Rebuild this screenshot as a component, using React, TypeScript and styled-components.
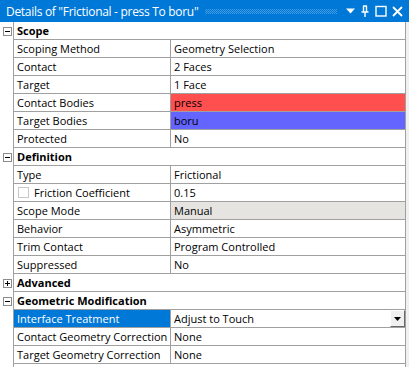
import React from 'react'
import styled, { createGlobalStyle } from 'styled-components'

const GlobalStyle = createGlobalStyle`
  html, body {
    margin: 0;
    padding: 0;
    background: #ffffff;
  }
  body {
    font-family: 'Open Sans', 'Noto Sans', sans-serif;
    font-size: 11px;
    color: #000;
  }
`

const LINE = '#a0a0a0'
const ACCENT = '#0078d7'

const Panel = styled.div`
  width: 409px;
  height: 367px;
  display: flex;
  flex-direction: column;
  overflow: hidden;
  background: #ffffff;
`

const TitleBar = styled.div`
  height: 22px;
  flex: none;
  display: flex;
  align-items: center;
  background: ${ACCENT};
  color: #fff;
  padding-left: 6px;
  padding-right: 6px;
  gap: 7px;
  font-size: 12px;
`

const TitleText = styled.span`
  white-space: nowrap;
  letter-spacing: -0.3px;
`

const Grip = styled.div`
  flex: 1;
  height: 5px;
  margin-top: 1px;
  background-image:
    linear-gradient(45deg, rgba(255, 255, 255, 0.25) 25%, transparent 25%, transparent 75%, rgba(255, 255, 255, 0.25) 75%),
    linear-gradient(45deg, rgba(255, 255, 255, 0.25) 25%, transparent 25%, transparent 75%, rgba(255, 255, 255, 0.25) 75%);
  background-size: 2px 2px;
  background-position: 0 0, 1px 1px;
`

const TitleButtons = styled.div`
  display: flex;
  align-items: center;
  gap: 5px;
  margin-left: 2px;
`

const Body = styled.div`
  flex: 1;
  display: flex;
  background: #f0f0f0;
`

const Grid = styled.div`
  width: 406px;
  background: #ffffff;
  display: flex;
  flex-direction: column;
`

const Row = styled.div`
  display: flex;
  height: 18px;
`

const Gutter = styled.div`
  width: 13px;
  flex: none;
  display: flex;
  align-items: center;
  justify-content: flex-start;
  padding-left: 3px;
  box-sizing: border-box;
`

const Expander = styled.div<{ $open: boolean }>`
  width: 9px;
  height: 9px;
  box-sizing: border-box;
  border: 1px solid #8c8c8c;
  background: #fff;
  position: relative;

  &::before {
    content: '';
    position: absolute;
    left: 1px;
    right: 1px;
    top: 3px;
    height: 1px;
    background: #000;
  }

  &::after {
    content: '';
    display: ${(p) => (p.$open ? 'none' : 'block')};
    position: absolute;
    top: 1px;
    bottom: 1px;
    left: 3px;
    width: 1px;
    background: #000;
  }
`

const Cell = styled.div<{ $w: number; $bg?: string; $color?: string; $bold?: boolean }>`
  width: ${(p) => p.$w}px;
  flex: none;
  box-sizing: border-box;
  height: 18px;
  border-left: 1px solid ${LINE};
  border-bottom: 1px solid ${LINE};
  background: ${(p) => p.$bg || '#fff'};
  color: ${(p) => p.$color || '#000'};
  font-weight: ${(p) => (p.$bold ? 700 : 400)};
  display: flex;
  align-items: center;
  padding-left: 3px;
  white-space: nowrap;
  position: relative;
  line-height: 17px;
`

const EndCell = styled(Cell)`
  border-right: 1px solid ${LINE};
`

const CheckBox = styled.span`
  width: 11px;
  height: 11px;
  box-sizing: border-box;
  border: 1px solid #c8c8c8;
  background: #fff;
  margin-left: 1px;
  margin-right: 5px;
`

const DropButton = styled.div`
  position: absolute;
  right: 0;
  top: 0;
  width: 15px;
  height: 17px;
  box-sizing: border-box;
  background: #f0f0f0;
  border-top: 1px solid #fff;
  border-left: 1px solid #fff;
  border-right: 1px solid #696969;
  border-bottom: 1px solid #696969;
  display: flex;
  align-items: center;
  justify-content: center;
`

const Filler = styled.div`
  flex: 1;
  margin-left: 13px;
  border-left: 1px solid ${LINE};
  border-right: 1px solid ${LINE};
`

type Item =
  | { kind: 'cat'; label: string; open: boolean }
  | {
      kind: 'prop'
      label: string
      value: string
      valueBg?: string
      labelSelected?: boolean
      check?: boolean
      dropdown?: boolean
    }

const items: Item[] = [
  { kind: 'cat', label: 'Scope', open: true },
  { kind: 'prop', label: 'Scoping Method', value: 'Geometry Selection' },
  { kind: 'prop', label: 'Contact', value: '2 Faces' },
  { kind: 'prop', label: 'Target', value: '1 Face' },
  { kind: 'prop', label: 'Contact Bodies', value: 'press', valueBg: '#ff4f4f' },
  { kind: 'prop', label: 'Target Bodies', value: 'boru', valueBg: '#6464ff' },
  { kind: 'prop', label: 'Protected', value: 'No' },
  { kind: 'cat', label: 'Definition', open: true },
  { kind: 'prop', label: 'Type', value: 'Frictional' },
  { kind: 'prop', label: 'Friction Coefficient', value: '0.15', check: true },
  { kind: 'prop', label: 'Scope Mode', value: 'Manual', valueBg: '#e6e4e1' },
  { kind: 'prop', label: 'Behavior', value: 'Asymmetric' },
  { kind: 'prop', label: 'Trim Contact', value: 'Program Controlled' },
  { kind: 'prop', label: 'Suppressed', value: 'No' },
  { kind: 'cat', label: 'Advanced', open: false },
  { kind: 'cat', label: 'Geometric Modification', open: true },
  {
    kind: 'prop',
    label: 'Interface Treatment',
    value: 'Adjust to Touch',
    labelSelected: true,
    dropdown: true,
  },
  { kind: 'prop', label: 'Contact Geometry Correction', value: 'None' },
  { kind: 'prop', label: 'Target Geometry Correction', value: 'None' },
]

const PinIcon = () => (
  <svg width="10" height="12" viewBox="0 0 10 12">
    <path d="M3 1h4M3.5 1v6M6.5 1v6M1.5 7h7M5 7v5" stroke="#fff" strokeWidth="1.4" fill="none" />
  </svg>
)

const App = () => {
  return (
    <>
      <GlobalStyle />
      <Panel>
        <TitleBar>
          <TitleText>Details of "Frictional - press To boru"</TitleText>
          <Grip />
          <TitleButtons>
            <svg width="9" height="6" viewBox="0 0 9 6">
              <path d="M0 0.5h9L4.5 5.5z" fill="#fff" />
            </svg>
            <PinIcon />
            <svg width="12" height="12" viewBox="0 0 12 12">
              <rect x="1" y="1.5" width="10" height="9.5" stroke="#fff" strokeWidth="1.4" fill="none" />
            </svg>
            <svg width="11" height="11" viewBox="0 0 11 11">
              <path d="M1 1l9 9M10 1l-9 9" stroke="#fff" strokeWidth="1.8" />
            </svg>
          </TitleButtons>
        </TitleBar>
        <Body>
          <Grid>
            {items.map((it, i) =>
              it.kind === 'cat' ? (
                <Row key={i}>
                  <Gutter>
                    <Expander $open={it.open} />
                  </Gutter>
                  <EndCell $w={393} $bold>
                    {it.label}
                  </EndCell>
                </Row>
              ) : (
                <Row key={i}>
                  <Gutter />
                  <Cell
                    $w={157}
                    $bg={it.labelSelected ? ACCENT : undefined}
                    $color={it.labelSelected ? '#fff' : undefined}
                  >
                    {it.check && <CheckBox />}
                    {it.label}
                  </Cell>
                  <EndCell $w={236} $bg={it.valueBg}>
                    {it.value}
                    {it.dropdown && (
                      <DropButton>
                        <svg width="7" height="4" viewBox="0 0 7 4">
                          <path d="M0 0h7L3.5 4z" fill="#000" />
                        </svg>
                      </DropButton>
                    )}
                  </EndCell>
                </Row>
              ),
            )}
            <Filler />
          </Grid>
        </Body>
      </Panel>
    </>
  )
}

export default App
